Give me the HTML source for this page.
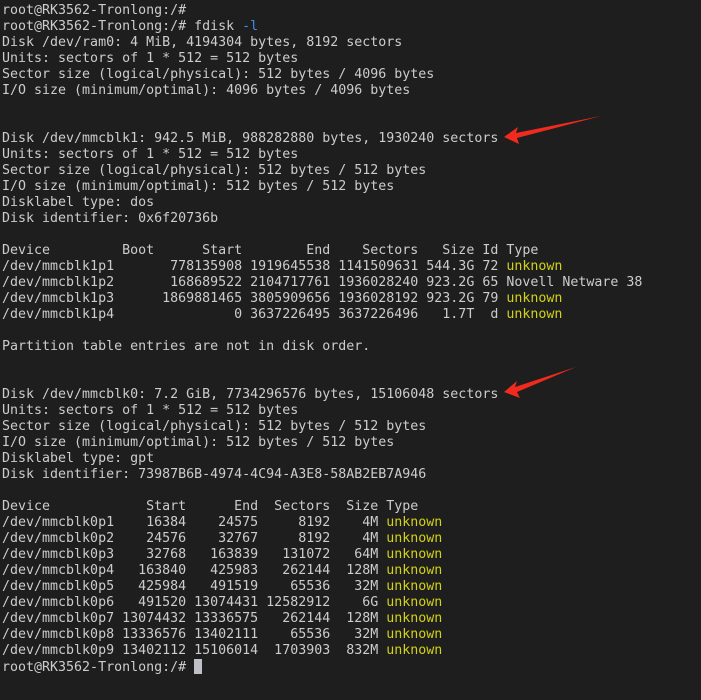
<!DOCTYPE html>
<html><head><meta charset="utf-8"><style>
html,body{margin:0;padding:0;background:#1e1e1e;width:701px;height:700px;overflow:hidden}
pre{margin:0;padding:3px 0 0 2px;font-family:"DejaVu Sans Mono","Liberation Mono",monospace;font-size:13.3px;line-height:16px;color:#cccccc;white-space:pre}
.y{color:#d2d219}.b{color:#3b8eea}
.cur{display:inline-block;width:8px;height:15px;background:#c0c0c8;vertical-align:-3px}
svg{position:absolute;left:0;top:0}
</style></head><body>
<pre>root@RK3562-Tronlong:/#
root@RK3562-Tronlong:/# fdisk <span class="b">-l</span>
Disk /dev/ram0: 4 MiB, 4194304 bytes, 8192 sectors
Units: sectors of 1 * 512 = 512 bytes
Sector size (logical/physical): 512 bytes / 4096 bytes
I/O size (minimum/optimal): 4096 bytes / 4096 bytes


Disk /dev/mmcblk1: 942.5 MiB, 988282880 bytes, 1930240 sectors
Units: sectors of 1 * 512 = 512 bytes
Sector size (logical/physical): 512 bytes / 512 bytes
I/O size (minimum/optimal): 512 bytes / 512 bytes
Disklabel type: dos
Disk identifier: 0x6f20736b

Device         Boot      Start        End    Sectors   Size Id Type
/dev/mmcblk1p1       778135908 1919645538 1141509631 544.3G 72 <span class="y">unknown</span>
/dev/mmcblk1p2       168689522 2104717761 1936028240 923.2G 65 Novell Netware 38
/dev/mmcblk1p3      1869881465 3805909656 1936028192 923.2G 79 <span class="y">unknown</span>
/dev/mmcblk1p4               0 3637226495 3637226496   1.7T  d <span class="y">unknown</span>

Partition table entries are not in disk order.


Disk /dev/mmcblk0: 7.2 GiB, 7734296576 bytes, 15106048 sectors
Units: sectors of 1 * 512 = 512 bytes
Sector size (logical/physical): 512 bytes / 512 bytes
I/O size (minimum/optimal): 512 bytes / 512 bytes
Disklabel type: gpt
Disk identifier: 73987B6B-4974-4C94-A3E8-58AB2EB7A946

Device            Start      End  Sectors  Size Type
/dev/mmcblk0p1    16384    24575     8192    4M <span class="y">unknown</span>
/dev/mmcblk0p2    24576    32767     8192    4M <span class="y">unknown</span>
/dev/mmcblk0p3    32768   163839   131072   64M <span class="y">unknown</span>
/dev/mmcblk0p4   163840   425983   262144  128M <span class="y">unknown</span>
/dev/mmcblk0p5   425984   491519    65536   32M <span class="y">unknown</span>
/dev/mmcblk0p6   491520 13074431 12582912    6G <span class="y">unknown</span>
/dev/mmcblk0p7 13074432 13336575   262144  128M <span class="y">unknown</span>
/dev/mmcblk0p8 13336576 13402111    65536   32M <span class="y">unknown</span>
/dev/mmcblk0p9 13402112 15106014  1703903  832M <span class="y">unknown</span>
root@RK3562-Tronlong:/# <span class="cur"></span></pre>
<svg width="701" height="700">
<polygon points="504,137 518,127 516,133 601,116 517,138 519,144" fill="#f02a1e"/>
<polygon points="504,392 517,381 515,387 576,367 517,392 520,398" fill="#f02a1e"/>
</svg>
</body></html>
